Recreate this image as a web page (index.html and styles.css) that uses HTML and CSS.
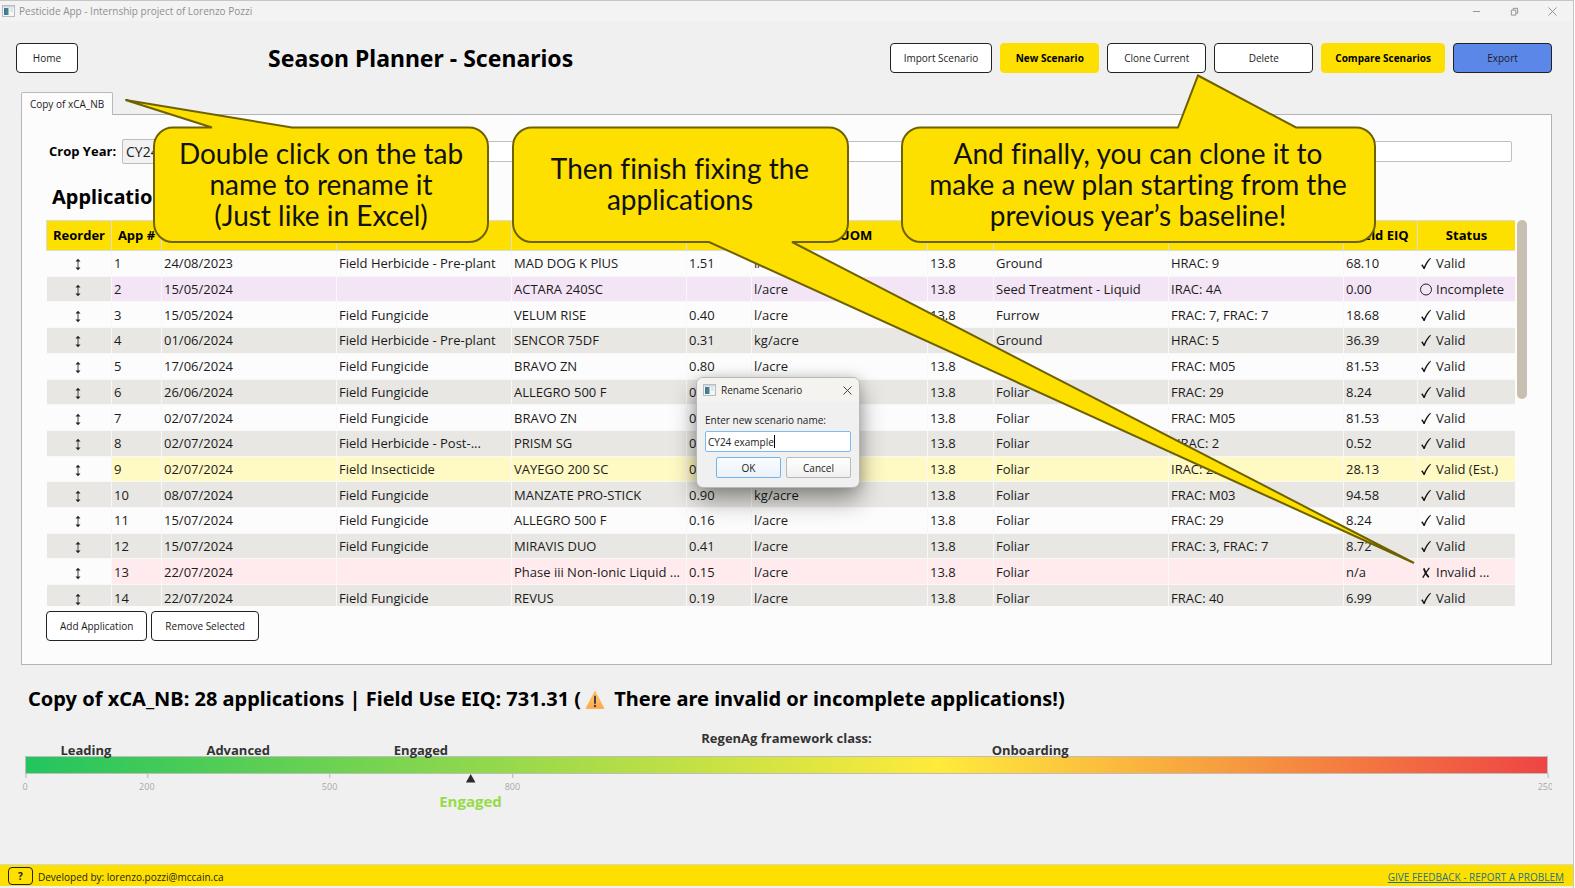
FILE: index.html
```html
<!DOCTYPE html>
<html lang="en">
<head>
<meta charset="utf-8">
<title>Pesticide App - Internship project of Lorenzo Pozzi</title>
<link rel="stylesheet" href="styles.css">
</head>
<body>
<svg class="sprite" aria-hidden="true">
  <symbol id="i-app" viewBox="0 0 13 12">
    <rect x=".5" y=".5" width="12" height="11" fill="#f4f6f8" stroke="#b4bcc4"/>
    <rect x="1" y="1" width="11" height="1.5" fill="#cfd6dc"/>
    <rect x="2" y="3" width="4.5" height="7" fill="#3f8a80"/>
    <rect x="2" y="3" width="2" height="7" fill="#4a6fa0"/>
    <rect x="8" y="3" width="3" height="4" fill="#dfe5ea"/>
  </symbol>
  <symbol id="i-move" viewBox="0 0 8 13">
    <path d="M4 2v9" stroke="#444" fill="none"/>
    <path d="M4 .8 6.500 3.500H1.500zM4 12.200 1.500 9.500h5z" fill="#222"/>
  </symbol>
  <symbol id="i-ok" viewBox="0 0 12 13">
    <path d="M1.200 8.200 2.400 7.200 4 9.800C5.500 6 7.600 3 10.500.7l.5.5C8.200 4.300 6.200 7.900 4.700 12H3.500C3 10.600 2.200 9.200 1.200 8.200z" fill="#111"/>
  </symbol>
  <symbol id="i-open" viewBox="0 0 12 13">
    <circle cx="6" cy="6.500" r="5.500" fill="none" stroke="#222"/>
  </symbol>
  <symbol id="i-bad" viewBox="0 0 12 13">
    <path d="M3 11.300C4.800 8.500 6.500 5.500 9 2.300" fill="none" stroke="#111" stroke-width="1.300" stroke-linecap="round"/>
    <path d="M4 3C4.800 5.800 6 8.500 8.300 10.700" fill="none" stroke="#111" stroke-width="1.800" stroke-linecap="round"/>
  </symbol>
</svg>

<div class="window">
  <header class="titlebar">
    <svg class="app-icon"><use href="#i-app"/></svg>
    <span class="titlebar-text">Pesticide App - Internship project of Lorenzo Pozzi</span>
    <button class="win-btn" aria-label="Minimize"><svg viewBox="0 0 10 10"><path d="M1 5h8"/></svg></button>
    <button class="win-btn" aria-label="Restore"><svg viewBox="0 0 10 10"><path d="M1.500 3.500h5v5.500h-5zM3.500 3V1.500h5V7H7"/></svg></button>
    <button class="win-btn" aria-label="Close"><svg viewBox="0 0 10 10"><path d="M.5.5l9 9M9.500.5l-9 9"/></svg></button>
  </header>

  <div class="toolbar">
    <button class="btn btn-home">Home</button>
    <h1 class="page-title">Season Planner - Scenarios</h1>
    <div class="actions">
      <button class="btn">Import Scenario</button>
      <button class="btn btn-primary">New Scenario</button>
      <button class="btn">Clone Current</button>
      <button class="btn">Delete</button>
      <button class="btn btn-primary">Compare Scenarios</button>
      <button class="btn btn-export">Export</button>
    </div>
  </div>

  <main class="content">
    <div class="tabs" role="tablist"><button class="tab" role="tab" aria-selected="true">Copy of xCA_NB</button></div>
    <section class="panel">
      <div class="filters">
        <label for="crop-year">Crop Year:</label>
        <select id="crop-year" class="crop-year"><option>CY24</option></select>
        <input class="filter-input" type="text" aria-label="Filter">
      </div>
      <h2 class="section-title">Applications</h2>
      <div class="table-area">
        <div class="table-clip">
          <table class="apps">
            <colgroup>
              <col class="c-65"><col class="c-50"><col class="c-175"><col class="c-175"><col class="c-175"><col class="c-65"><col class="c-176"><col class="c-66"><col class="c-175"><col class="c-175"><col class="c-74"><col class="c-98">
            </colgroup>
            <thead>
              <tr><th>Reorder</th><th>App #</th><th>Date</th><th>Product Type</th><th>Product</th><th>Rate</th><th>Rate UOM</th><th>Area</th><th>Method</th><th>AI Groups</th><th>Field EIQ</th><th>Status</th></tr>
            </thead>
            <tbody>
              <tr><td><svg class="move"><use href="#i-move"/></svg></td><td>1</td><td>24/08/2023</td><td>Field Herbicide - Pre-plant</td><td>MAD DOG K PlUS</td><td>1.51</td><td>l/acre</td><td>13.8</td><td>Ground</td><td>HRAC: 9</td><td>68.10</td><td><svg class="mark"><use href="#i-ok"/></svg>Valid</td></tr>
              <tr class="incomplete"><td><svg class="move"><use href="#i-move"/></svg></td><td>2</td><td>15/05/2024</td><td></td><td>ACTARA 240SC</td><td></td><td>l/acre</td><td>13.8</td><td>Seed Treatment - Liquid</td><td>IRAC: 4A</td><td>0.00</td><td><svg class="mark"><use href="#i-open"/></svg>Incomplete</td></tr>
              <tr><td><svg class="move"><use href="#i-move"/></svg></td><td>3</td><td>15/05/2024</td><td>Field Fungicide</td><td>VELUM RISE</td><td>0.40</td><td>l/acre</td><td>13.8</td><td>Furrow</td><td>FRAC: 7, FRAC: 7</td><td>18.68</td><td><svg class="mark"><use href="#i-ok"/></svg>Valid</td></tr>
              <tr><td><svg class="move"><use href="#i-move"/></svg></td><td>4</td><td>01/06/2024</td><td>Field Herbicide - Pre-plant</td><td>SENCOR 75DF</td><td>0.31</td><td>kg/acre</td><td>13.8</td><td>Ground</td><td>HRAC: 5</td><td>36.39</td><td><svg class="mark"><use href="#i-ok"/></svg>Valid</td></tr>
              <tr><td><svg class="move"><use href="#i-move"/></svg></td><td>5</td><td>17/06/2024</td><td>Field Fungicide</td><td>BRAVO ZN</td><td>0.80</td><td>l/acre</td><td>13.8</td><td>Foliar</td><td>FRAC: M05</td><td>81.53</td><td><svg class="mark"><use href="#i-ok"/></svg>Valid</td></tr>
              <tr><td><svg class="move"><use href="#i-move"/></svg></td><td>6</td><td>26/06/2024</td><td>Field Fungicide</td><td>ALLEGRO 500 F</td><td>0.16</td><td>l/acre</td><td>13.8</td><td>Foliar</td><td>FRAC: 29</td><td>8.24</td><td><svg class="mark"><use href="#i-ok"/></svg>Valid</td></tr>
              <tr><td><svg class="move"><use href="#i-move"/></svg></td><td>7</td><td>02/07/2024</td><td>Field Fungicide</td><td>BRAVO ZN</td><td>0.80</td><td>l/acre</td><td>13.8</td><td>Foliar</td><td>FRAC: M05</td><td>81.53</td><td><svg class="mark"><use href="#i-ok"/></svg>Valid</td></tr>
              <tr><td><svg class="move"><use href="#i-move"/></svg></td><td>8</td><td>02/07/2024</td><td>Field Herbicide - Post-...</td><td>PRISM SG</td><td>0.02</td><td>kg/acre</td><td>13.8</td><td>Foliar</td><td>HRAC: 2</td><td>0.52</td><td><svg class="mark"><use href="#i-ok"/></svg>Valid</td></tr>
              <tr class="estimated"><td><svg class="move"><use href="#i-move"/></svg></td><td>9</td><td>02/07/2024</td><td>Field Insecticide</td><td>VAYEGO 200 SC</td><td>0.10</td><td>l/acre</td><td>13.8</td><td>Foliar</td><td>IRAC: 28</td><td>28.13</td><td><svg class="mark"><use href="#i-ok"/></svg>Valid (Est.)</td></tr>
              <tr><td><svg class="move"><use href="#i-move"/></svg></td><td>10</td><td>08/07/2024</td><td>Field Fungicide</td><td>MANZATE PRO-STICK</td><td>0.90</td><td>kg/acre</td><td>13.8</td><td>Foliar</td><td>FRAC: M03</td><td>94.58</td><td><svg class="mark"><use href="#i-ok"/></svg>Valid</td></tr>
              <tr><td><svg class="move"><use href="#i-move"/></svg></td><td>11</td><td>15/07/2024</td><td>Field Fungicide</td><td>ALLEGRO 500 F</td><td>0.16</td><td>l/acre</td><td>13.8</td><td>Foliar</td><td>FRAC: 29</td><td>8.24</td><td><svg class="mark"><use href="#i-ok"/></svg>Valid</td></tr>
              <tr><td><svg class="move"><use href="#i-move"/></svg></td><td>12</td><td>15/07/2024</td><td>Field Fungicide</td><td>MIRAVIS DUO</td><td>0.41</td><td>l/acre</td><td>13.8</td><td>Foliar</td><td>FRAC: 3, FRAC: 7</td><td>8.72</td><td><svg class="mark"><use href="#i-ok"/></svg>Valid</td></tr>
              <tr class="invalid"><td><svg class="move"><use href="#i-move"/></svg></td><td>13</td><td>22/07/2024</td><td></td><td>Phase iii Non-Ionic Liquid ...</td><td>0.15</td><td>l/acre</td><td>13.8</td><td>Foliar</td><td></td><td>n/a</td><td><svg class="mark"><use href="#i-bad"/></svg>Invalid ...</td></tr>
              <tr><td><svg class="move"><use href="#i-move"/></svg></td><td>14</td><td>22/07/2024</td><td>Field Fungicide</td><td>REVUS</td><td>0.19</td><td>l/acre</td><td>13.8</td><td>Foliar</td><td>FRAC: 40</td><td>6.99</td><td><svg class="mark"><use href="#i-ok"/></svg>Valid</td></tr>
            </tbody>
          </table>
        </div>
        <div class="scrollbar"><div class="thumb"></div></div>
      </div>
      <div class="table-actions">
        <button class="btn">Add Application</button>
        <button class="btn">Remove Selected</button>
      </div>
    </section>

    <h2 class="summary">Copy of xCA_NB: 28 applications | Field Use EIQ: 731.31 (<svg class="warn" viewBox="0 0 20 20" role="img" aria-label="Warning"><defs><linearGradient id="wg" x1="0" y1="0" x2="0" y2="1"><stop offset="0" stop-color="#ffd45a"/><stop offset="1" stop-color="#ffa550"/></linearGradient></defs><path d="M10 1.500 19 18.500H1z" fill="url(#wg)" stroke="#ffb357" stroke-linejoin="round"/><path d="M10 6.500v6.500" stroke="#4a3c50" stroke-width="2" stroke-linecap="round"/><circle cx="10" cy="16" r="1.200" fill="#4a3c50"/></svg> There are invalid or incomplete applications!)</h2>

    <section class="scale">
      <div class="scale-title">RegenAg framework class:</div>
      <div class="classes"><span>Leading</span><span>Advanced</span><span>Engaged</span><span>Onboarding</span></div>
      <div class="bar"></div>
      <div class="axis">
        <span class="tick" style="left:0%">0</span>
        <span class="tick" style="left:8%">200</span>
        <span class="tick" style="left:20%">500</span>
        <span class="tick" style="left:32%">800</span>
        <span class="tick" style="left:100%">2500</span>
        <div class="pointer" style="left:29.25%"><svg viewBox="0 0 10 9"><path d="M5 0l4.800 8.500H.2z" fill="#2b2b2b"/></svg><span>Engaged</span></div>
      </div>
    </section>
  </main>

  <footer class="footer">
    <button class="help" aria-label="Help">?</button>
    <span class="credit">Developed by: lorenzo.pozzi@mccain.ca</span>
    <a class="feedback" href="#">GIVE FEEDBACK - REPORT A PROBLEM</a>
  </footer>

  <form class="dialog" role="dialog" aria-label="Rename Scenario">
    <div class="dialog-head">
      <svg class="app-icon"><use href="#i-app"/></svg>
      <span>Rename Scenario</span>
      <button type="button" class="dialog-close" aria-label="Close dialog"><svg viewBox="0 0 10 10"><path d="M.5.5l9 9M9.500.5l-9 9"/></svg></button>
    </div>
    <div class="dialog-body">
      <label for="name">Enter new scenario name:</label>
      <div class="name-field"><input id="name" type="text" value="CY24 example"><i class="caret"></i></div>
      <div class="dialog-actions"><button type="button" class="dlg-btn dlg-default">OK</button><button type="button" class="dlg-btn">Cancel</button></div>
    </div>
  </form>

  <svg class="callout-shapes" viewBox="0 0 1575 888" aria-hidden="true">
    <path d="M173 127.500H212L125.500 100 292 127.500H469a19 19 0 0 1 19 19V223a19 19 0 0 1-19 19H173a19 19 0 0 1-19-19V146.500a19 19 0 0 1 19-19z"/>
    <path d="M532 127.500H829a19 19 0 0 1 19 19V223a19 19 0 0 1-19 19H792L1414 563 709 242H532a19 19 0 0 1-19-19V146.500a19 19 0 0 1 19-19z"/>
    <path d="M921 127.500H1178L1198 75.500 1296 127.500H1356a19 19 0 0 1 19 19V223a19 19 0 0 1-19 19H921a19 19 0 0 1-19-19V146.500a19 19 0 0 1 19-19z"/>
  </svg>
  <div class="callout callout-tab">Double click on the tab<br>name to rename it<br>(Just like in Excel)</div>
  <div class="callout callout-fix">Then finish fixing the<br>applications</div>
  <div class="callout callout-clone">And finally, you can clone it to<br>make a new plan starting from the<br>previous year’s baseline!</div>
</div>
</body>
</html>
```
FILE: styles.css
```css
* { box-sizing: border-box; }

body {
  margin: 0;
  background: #fff;
  color: #1b1b1b;
  font-family: "Segoe UI", "Open Sans", "Noto Sans", sans-serif;
  font-size: 13px;
}

button, input, select { font: inherit; color: inherit; }
button { padding: 0; cursor: pointer; }
h1, h2 { margin: 0; color: #000; font-family: "Noto Sans", sans-serif; font-weight: 700; }
.sprite { position: absolute; width: 0; height: 0; }

.window {
  position: relative;
  display: flex;
  flex-direction: column;
  min-height: 100vh;
  margin-right: 1px;
  padding-bottom: 2px;
  border-top: 1px solid #c6c6c6;
  border-right: 1px solid #c6c6c6;
  background: #f0f0f0;
  overflow: hidden;
}

.titlebar {
  display: flex;
  align-items: center;
  height: 20px;
  padding: 0 11px 0 2px;
  background: #f3f3f3;
  color: #8f8f8f;
  font-size: 10px;
}
.app-icon { width: 13px; height: 12px; }
.titlebar-text { flex: 1; margin-left: 4px; }
.win-btn { display: grid; place-items: center; width: 20px; height: 16px; margin-left: 18px; border: 0; background: none; }
.win-btn svg { width: 9px; height: 9px; fill: none; stroke: #8a8a8a; }

.toolbar { display: flex; align-items: center; padding: 22px 21px 0 16px; }
.btn {
  height: 30px;
  padding: 0 13px;
  border: 1px solid #222;
  border-radius: 4px;
  background: #fff;
  font-size: 10px;
}
.btn-home { width: 62px; }
.page-title { margin-left: 190px; font-size: 23px; line-height: 30px; }
.actions { display: flex; gap: 8px; margin-left: auto; }
.actions .btn { min-width: 99px; }
.actions .btn-primary { border-color: #fde000; background: #fde000; color: #000; font-weight: 700; }
.actions .btn-export { background: #5b87e8; }

.content { flex: 1; padding: 19px 21px 0; }
.tabs { display: flex; }
.tab {
  height: 23px;
  width: 92px;
  margin-bottom: -1px;
  border: 1px solid #b9b9b9;
  border-bottom: 0;
  border-radius: 2px 2px 0 0;
  background: #fcfcfc;
  font-size: 10px;
  z-index: 1;
}
.panel { height: 551px; padding: 23px 24px 0; border: 1px solid #b4b4b4; background: #fcfcfc; }

.filters { display: flex; align-items: center; height: 26px; padding: 0 15px 0 3px; }
.filters label { width: 73px; color: #000; font-weight: 700; }
.crop-year { width: 120px; height: 25px; border: 1px solid #bdbdbd; border-radius: 2px; background: #f2f2f2; font-size: 14px; appearance: none; padding: 0 3px; }
.filter-input { flex: 1; min-width: 0; height: 21px; margin-left: 8px; border: 1px solid #c0c0c0; border-radius: 2px; background: #fff; }
.section-title { margin: 18px 0 8px 6px; font-size: 20px; line-height: 30px; }

.table-area { display: flex; height: 386px; }
.table-clip { flex: 1; height: 386px; overflow: hidden; }
.apps { width: 100%; height: 391px; table-layout: fixed; border-collapse: collapse; }
.c-50 { width: 50px; }
.c-65 { width: 65px; }
.c-66 { width: 66px; }
.c-74 { width: 74px; }
.c-98 { width: 98px; }
.c-175 { width: 175px; }
.c-176 { width: 176px; }
.apps th {
  height: 30px;
  padding: 0 0 2px;
  border: 1px solid #dcdcdc;
  background: #fde000;
  color: #000;
  font-weight: 700;
  white-space: nowrap;
}
.apps td {
  padding: 0 0 0 2px;
  border-right: 1px solid #f8f8f8;
  border-bottom: 1px solid #f8f8f8;
  line-height: 18px;
  white-space: nowrap;
}
.apps td:first-child { padding: 0 2px 0 0; text-align: center; }
.apps tbody tr:nth-child(even) td { background: #e8e7e3; }
.apps tbody .incomplete td:not(:first-child) { background: #f3e5f5; }
.apps tbody .estimated td:not(:first-child) { background: #fff9c4; }
.apps tbody .invalid td:not(:first-child) { background: #ffebee; }
.move { width: 8px; height: 13px; vertical-align: middle; }
.mark { width: 12px; height: 13px; margin-right: 4px; vertical-align: -2px; }
.scrollbar { width: 12px; padding-left: 2px; }
.thumb { height: 179px; border-radius: 5px; background: #c8bfb0; }
.table-actions { display: flex; gap: 4px; margin-top: 5px; }

.summary { margin: 18px 0 0 7px; font-size: 20px; line-height: 32px; white-space: nowrap; }
.warn { width: 20px; height: 20px; margin: 0 4px; vertical-align: -4px; }

.scale { margin: 16px 0 0 -21px; padding: 0 4px 0 25px; color: #333; font-weight: 700; overflow: hidden; }
.scale-title { line-height: 14px; text-align: center; }
.classes { display: grid; grid-template-columns: 2fr 3fr 3fr 17fr; line-height: 11px; height: 11px; text-align: center; }
.bar { height: 18px; border: 1px solid #bdbdbd; background: linear-gradient(90deg, #22c55e 0%, #ffeb3b 60%, #ef4444 100%); }
.axis { position: relative; height: 50px; color: #a9a9a9; font-size: 9px; font-weight: 400; }
.tick { position: absolute; top: 6px; transform: translateX(-50%); }
.tick::before { content: ""; position: absolute; left: 50%; top: -6px; width: 1px; height: 4px; background: #b5b5b5; }
.pointer { position: absolute; top: 0; display: flex; flex-direction: column; align-items: center; gap: 8px; transform: translateX(-50%); color: #95db47; font-size: 15px; font-weight: 700; line-height: 20px; }
.pointer svg { width: 10px; height: 9px; }

.footer { display: flex; align-items: center; height: 22px; padding: 0 9px 0 8px; border-top: 1px solid #d8d8c8; background: #fde000; font-size: 10px; }
.help { width: 25px; height: 18px; margin-right: 5px; border: 1px solid #222; border-radius: 4px; background: none; font-weight: 700; }
.credit, .feedback { padding-top: 2px; }
.feedback { margin-left: auto; color: #2a7086; }

.dialog {
  position: absolute;
  left: 696px;
  top: 376px;
  width: 164px;
  border: 1px solid #b8b8b8;
  border-radius: 7px;
  background: #f0f0f0;
  box-shadow: 0 12px 24px rgba(0, 0, 0, .4), 0 0 12px rgba(0, 0, 0, .15);
  font-size: 10px;
  overflow: hidden;
}
.dialog-head { display: flex; align-items: center; height: 24px; padding: 0 7px 0 6px; background: #f4f3ef; }
.dialog-head span { flex: 1; margin-left: 5px; }
.dialog-close { display: grid; place-items: center; width: 10px; height: 16px; border: 0; background: none; }
.dialog-close svg { width: 9px; height: 9px; fill: none; stroke: #333; }
.dialog-body { padding: 11px 8px 9px; }
.dialog-body label { display: block; line-height: 14px; }
.name-field { position: relative; margin-top: 4px; }
.name-field input { display: block; width: 100%; height: 21px; padding: 0 2px; border: 1px solid #7abaf5; border-radius: 2px; background: #fff; outline: 0; }
.caret { position: absolute; left: 69px; top: 4px; width: 1px; height: 13px; background: #000; }
.dialog-actions { display: flex; justify-content: flex-end; gap: 5px; margin-top: 5px; }
.dlg-btn { width: 65px; height: 21px; border: 1px solid #b9b9b9; border-radius: 2px; background: linear-gradient(#fff, #f0f0f0); }
.dlg-default { border-color: #6cb4f0; background: linear-gradient(#fbfdff, #eaf1f7); }

.callout-shapes { position: absolute; left: 0; top: -1px; width: 1575px; height: 888px; fill: #fde000; stroke: #6e6100; stroke-width: 2; pointer-events: none; }
.callout {
  position: absolute;
  top: 125px;
  display: grid;
  place-content: center;
  height: 116px;
  color: #111;
  font-family: "Century Gothic", "URW Gothic", Lato, sans-serif;
  font-size: 28px;
  font-variant-ligatures: none;
  line-height: 31px;
  text-align: center;
  white-space: nowrap;
}
.callout-tab { left: 153px; width: 336px; }
.callout-fix { left: 512px; width: 336px; }
.callout-clone { left: 901px; width: 474px; }
```
